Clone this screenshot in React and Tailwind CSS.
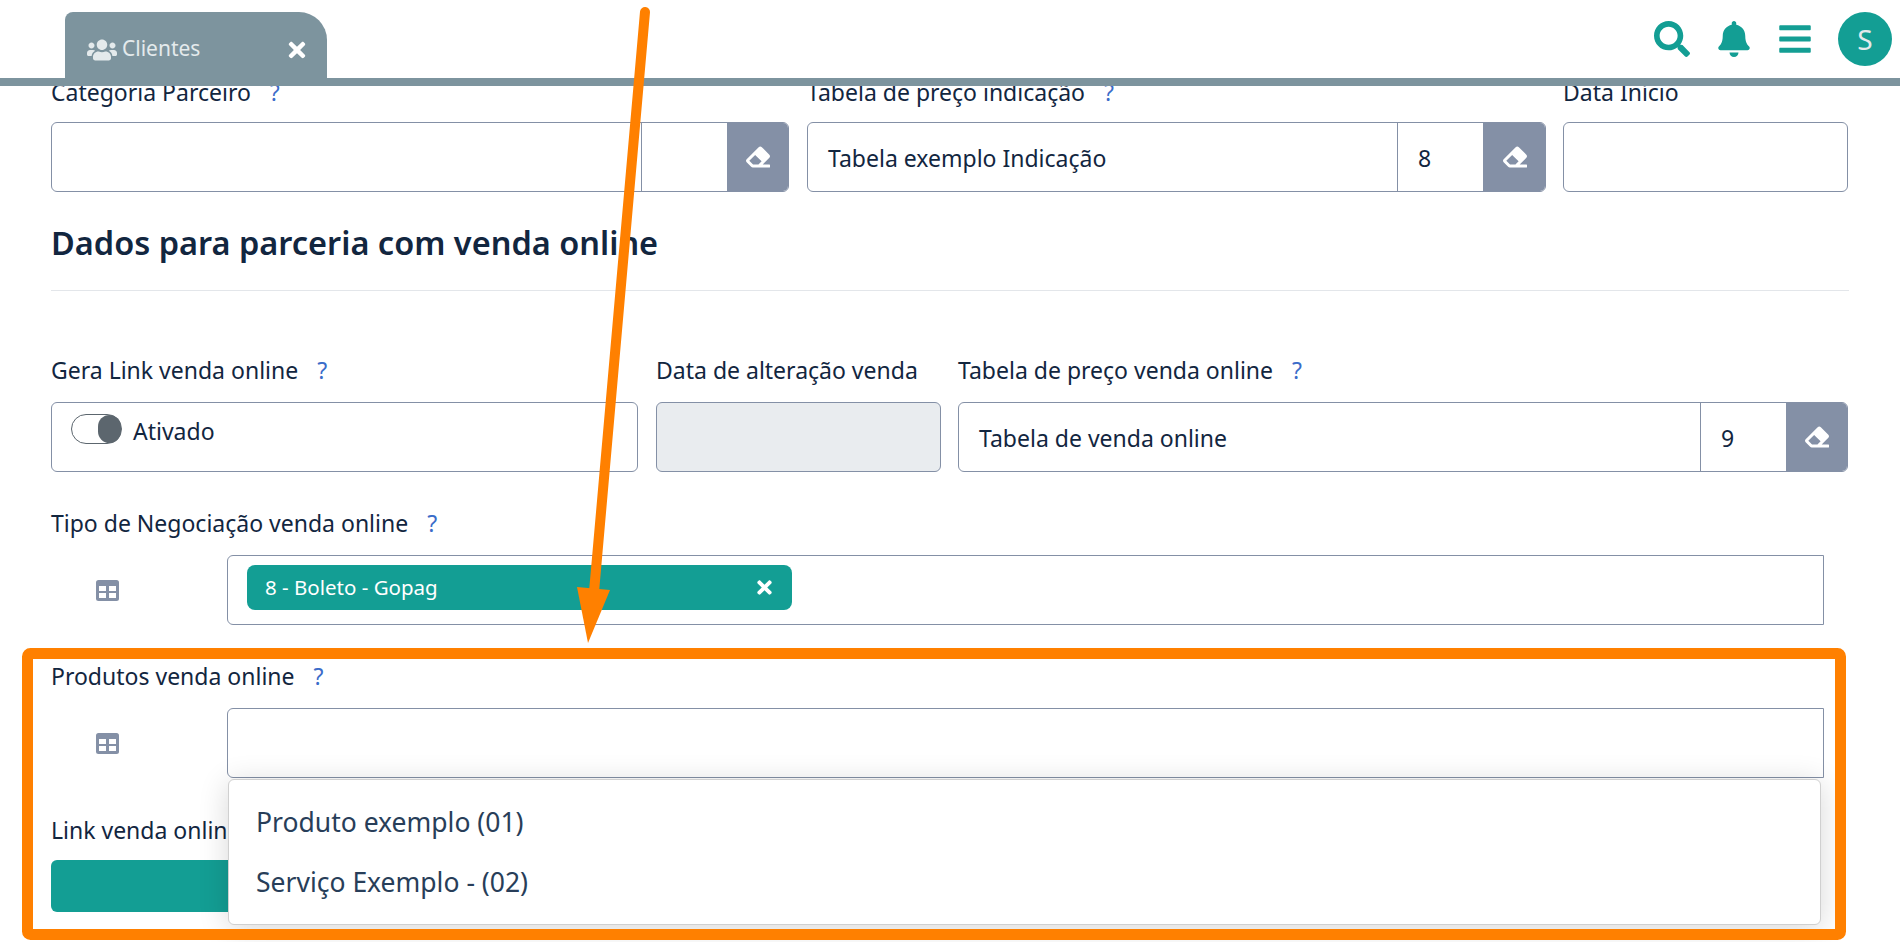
import React from "react";
import { FaUsers, FaTimes, FaEraser, FaSearch, FaBell, FaBars } from "react-icons/fa";

function Label({ text, help = true, className = "" }) {
  return (
    <div className={`h-[28px] flex items-center text-[23px] text-[#12263f] whitespace-nowrap ${className}`}>
      <span>{text}</span>
      {help && <span className="ml-[19px] text-[#3b6cc9]">?</span>}
    </div>
  );
}

function LookupField({ value, code, widthClass, codeWidth, eraserWidth = "w-[62px]" }) {
  return (
    <div className={`flex h-[70px] ${widthClass} border border-[#8490a6] rounded-[6px] overflow-hidden bg-white`}>
      <div className="flex-1 flex items-center pl-[20px] pt-[2px] text-[23px] text-[#12263f] whitespace-nowrap">{value}</div>
      <div className={`${codeWidth} border-l border-[#8490a6] flex items-center pl-[20px] pt-[2px] text-[23px] text-[#12263f]`}>{code}</div>
      <div className={`${eraserWidth} -my-px -mr-px bg-[#8490a6] flex items-center justify-center text-white`}>
        <FaEraser className="text-[24px]" />
      </div>
    </div>
  );
}

function TableIcon() {
  return (
    <svg width="23" height="21" viewBox="0 0 23 21">
      <rect width="23" height="21" rx="2.5" fill="#8490a6" />
      <rect x="3" y="6" width="7" height="5" fill="#fff" />
      <rect x="13" y="6" width="7" height="5" fill="#fff" />
      <rect x="3" y="13" width="7" height="5" fill="#fff" />
      <rect x="13" y="13" width="7" height="5" fill="#fff" />
    </svg>
  );
}

function MultiSelect({ children }) {
  return (
    <div className="flex items-center">
      <div className="w-[176px] pl-[45px]">
        <TableIcon />
      </div>
      <div className="w-[1597px] h-[70px] border border-[#8490a6] rounded-l-[6px] bg-white pl-[19px] pt-[9px]">
        {children}
      </div>
    </div>
  );
}

export default function App() {
  return (
    <div className="relative h-[942px] w-[1900px] overflow-hidden bg-white font-['Noto_Sans','Open_Sans',sans-serif]">
      <header className="relative z-10 h-[86px] bg-white border-b-[8px] border-[#7d949e] flex justify-between">
        <div className="ml-[65px] mt-[12px] w-[262px] h-[66px] bg-[#7d949e] rounded-tl-[8px] rounded-tr-[28px] flex items-start text-[#e4eaec]">
          <FaUsers className="ml-[22px] mt-[23px] text-[30px]" />
          <span className="ml-[5px] mt-[21px] text-[21px]">Clientes</span>
          <FaTimes className="ml-[85px] mt-[26px] text-[24px] text-white" />
        </div>
        <div className="flex items-start text-[#139e94]">
          <FaSearch className="mt-[21px] text-[36px]" />
          <FaBell className="ml-[26px] mt-[21px] text-[36px]" />
          <FaBars className="ml-[25px] mt-[21px] text-[36px]" />
          <div className="ml-[25px] mr-[8px] mt-[12px] w-[54px] h-[54px] rounded-full bg-[#139e94] flex items-center justify-center text-[#e4eaec] text-[28px]">S</div>
        </div>
      </header>

      <main className="pl-[51px] -mt-[8px]">
        <div className="flex gap-[18px]">
          <div>
            <Label text="Categoria Parceiro" className="mb-[16px]" />
            <LookupField value="" code="" widthClass="w-[738px]" codeWidth="w-[86px]" />
          </div>
          <div>
            <Label text="Tabela de preço indicação" className="mb-[16px]" />
            <LookupField value="Tabela exemplo Indicação" code="8" widthClass="w-[739px]" codeWidth="w-[86px]" eraserWidth="w-[63px]" />
          </div>
          <div className="-ml-px">
            <Label text="Data Início" help={false} className="mb-[16px]" />
            <div className="w-[285px] h-[70px] border border-[#8490a6] rounded-[6px]" />
          </div>
        </div>

        <h2 className="mt-[31px] h-[40px] flex items-center text-[32.5px] font-semibold text-[#12263f]">Dados para parceria com venda online</h2>
        <div className="mt-[27px] w-[1798px] border-t border-[#e3e6ea]" />

        <div className="mt-[65px] flex">
          <div>
            <Label text="Gera Link venda online" className="mb-[18px]" />
            <div className="w-[587px] h-[70px] border border-[#8490a6] rounded-[6px] pl-[19px] pt-[11px] flex items-start">
              <div className="w-[51px] h-[30px] rounded-full border border-[#5c666e] flex justify-end bg-white">
                <div className="w-[23px] h-[28px] rounded-full bg-[#5c666e]" />
              </div>
              <span className="ml-[11px] text-[23px] leading-[35px] text-[#12263f]">Ativado</span>
            </div>
          </div>
          <div className="ml-[18px]">
            <Label text="Data de alteração venda" help={false} className="mb-[18px]" />
            <div className="w-[285px] h-[70px] border border-[#8490a6] rounded-[6px] bg-[#e9ecef]" />
          </div>
          <div className="ml-[17px]">
            <Label text="Tabela de preço venda online" className="mb-[18px]" />
            <LookupField value="Tabela de venda online" code="9" widthClass="w-[890px]" codeWidth="w-[86px]" />
          </div>
        </div>

        <Label text="Tipo de Negociação venda online" className="mt-[37px] mb-[18px]" />
        <MultiSelect>
          <div className="w-[545px] h-[45px] rounded-[8px] bg-[#139e94] flex items-center justify-between pl-[18px] pr-[17px] text-white text-[20.5px]">
            <span>8 - Boleto - Gopag</span>
            <FaTimes className="text-[21px]" />
          </div>
        </MultiSelect>

        <Label text="Produtos venda online" className="mt-[37px] mb-[18px]" />
        <div className="relative">
          <MultiSelect />
          <div className="absolute z-20 left-[177px] top-[71px] w-[1593px] h-[146px] rounded-[6px] border border-[#d0d0d0] bg-white shadow-[0_4px_30px_rgba(0,0,0,0.16)] pl-[27px] pt-[13px] text-[26.5px] text-[#283e59]">
            <div className="h-[60px] flex items-center">Produto exemplo (01)</div>
            <div className="h-[60px] flex items-center">Serviço Exemplo - (02)</div>
          </div>
        </div>

        <Label text="Link venda online" help={false} className="mt-[38px] mb-[16px]" />
        <div className="w-[700px] h-[52px] rounded-[6px] bg-[#139e94]" />
      </main>

      <svg className="absolute left-0 top-0 z-30 pointer-events-none" width="1900" height="942" viewBox="0 0 1900 942" fill="none">
        <rect x="27.5" y="653.5" width="1813" height="281" rx="3" stroke="#ff8000" strokeWidth="11" />
        <path d="M645 12 L594 592" stroke="#ff8000" strokeWidth="10" strokeLinecap="round" />
        <path d="M577 587 L610 590 L588 643 Z" fill="#ff8000" />
      </svg>
    </div>
  );
}
